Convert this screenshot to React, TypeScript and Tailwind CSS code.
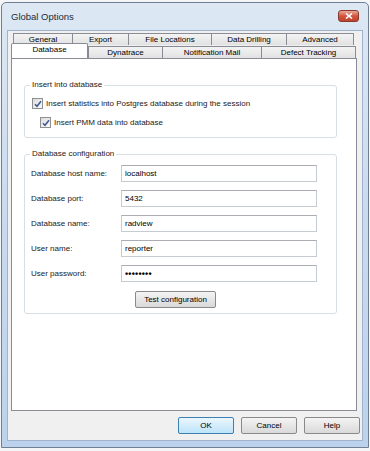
import React from "react";

const font = { fontFamily: '"Liberation Sans", Arial, sans-serif' };

function Tab({ label, w, selected }: { label: string; w: number; selected?: boolean }) {
  if (selected) {
    return (
      <div
        className="relative z-10 -mt-[2px] h-[15px] shrink-0 border border-b-0 border-[#898c95] bg-white text-center text-[8px] leading-[12px] text-black rounded-t-[2px]"
        style={{ width: w }}
      >
        {label}
      </div>
    );
  }
  return (
    <div
      className="h-[12px] shrink-0 border border-b-0 border-l-0 border-[#898c95] bg-gradient-to-b from-[#f3f3f3] to-[#e2e2e2] text-center text-[8px] leading-[11px] text-black first:border-l"
      style={{ width: w }}
    >
      {label}
    </div>
  );
}

function CheckBox() {
  return (
    <div className="flex h-[11px] w-[11px] shrink-0 items-center justify-center border border-[#8e8f8f] bg-gradient-to-br from-[#dcdcdc] to-[#fbfbfb]">
      <svg width="8" height="8" viewBox="0 0 8 8">
        <path d="M1 4.2 L3 6.3 L7 1.2" fill="none" stroke="#3f5892" strokeWidth="1.5" />
      </svg>
    </div>
  );
}

function Field({ label, value, password }: { label: string; value: string; password?: boolean }) {
  return (
    <div className="flex h-[17px] items-center">
      <div className="w-[96px] shrink-0 pl-[6px] text-[8px] leading-[10px] text-[#1a1a1a]">{label}</div>
      <div className="flex h-[17px] w-[196px] items-center border border-[#c6cbd2] border-t-[#abadb3] bg-white pl-[3px]">
        {password ? (
          <span className="text-[9px] font-bold leading-[10px] tracking-[0.2px] text-black">••••••••</span>
        ) : (
          <span className="text-[8px] leading-[10px] text-black">{value}</span>
        )}
      </div>
    </div>
  );
}

function Btn({ label, w, def }: { label: string; w: number; def?: boolean }) {
  return (
    <div
      className={
        "flex h-[17px] items-center justify-center rounded-[2px] border text-[8px] leading-[10px] text-black " +
        (def
          ? "border-[#3c7fb1] bg-gradient-to-b from-[#ebf6fd] to-[#bde4f9]"
          : "border-[#8a8a8a] bg-gradient-to-b from-[#f4f4f4] to-[#d9d9d9]")
      }
      style={{ width: w }}
    >
      {label}
    </div>
  );
}

export default function App() {
  return (
    <div className="h-[451px] w-[370px] overflow-hidden bg-[#f4f5f6]" style={font}>
      <div className="ml-[1px] mt-[2px] flex h-[446px] w-[368px] flex-col rounded-t-[5px] border border-[#6f7f94] bg-gradient-to-b from-[#dde8f4] via-[#c9daee] to-[#bcd2ec]">
        {/* title bar */}
        <div className="flex h-[27px] items-center justify-between pl-[9px] pr-[9px]">
          <span className="text-[9.5px] leading-[12px] text-[#1e2a3a]">Global Options</span>
          <div className="mt-[-1px] flex h-[12px] w-[21px] items-center justify-center rounded-[3px] border border-[#8a3a2c] bg-gradient-to-b from-[#e9a99b] via-[#d0553f] to-[#c2432c]">
            <svg width="8" height="6" viewBox="0 0 8 6">
              <path d="M1 0.5 L7 5.5 M7 0.5 L1 5.5" stroke="white" strokeWidth="1.6" />
            </svg>
          </div>
        </div>
        {/* client area */}
        <div className="mx-[5px] flex h-[411px] flex-col border border-[#9fb3cc] bg-[#f0f0f0] pl-[3px] pt-[2px]">
          {/* tabs */}
          <div className="flex h-[25px] flex-col">
            <div className="ml-[2px] flex h-[12px]">
              <Tab label="General" w={60} />
              <Tab label="Export" w={56} />
              <Tab label="File Locations" w={83} />
              <Tab label="Data Drilling" w={75} />
              <Tab label="Advanced" w={67} />
            </div>
            <div className="flex h-[13px] items-end">
              <Tab label="Database" w={77} selected />
              <div className="flex">
                <Tab label="Dynatrace" w={75} />
                <Tab label="Notification Mail" w={99} />
                <Tab label="Defect Tracking" w={94} />
              </div>
            </div>
          </div>
          {/* panel */}
          <div className="flex h-[353px] w-[346px] flex-col border border-[#898c95] bg-white pl-[12px] pt-[21px]">
            <fieldset className="h-[58px] w-[313px] rounded-[3px] border border-[#d5dfe5] px-0 pb-0 pt-0">
              <legend className="ml-[5px] px-[2px] text-[8px] leading-[10px] text-[#1a1a1a]">Insert into database</legend>
              <div className="ml-[7px] mt-[8px] flex h-[11px] items-center gap-[3px]">
                <CheckBox />
                <span className="text-[8px] leading-[10px] text-[#1a1a1a]">Insert statistics into Postgres database during the session</span>
              </div>
              <div className="ml-[15px] mt-[8px] flex h-[11px] items-center gap-[3px]">
                <CheckBox />
                <span className="text-[8px] leading-[10px] text-[#1a1a1a]">Insert PMM data into database</span>
              </div>
            </fieldset>
            <fieldset className="mt-[11px] h-[165px] w-[313px] rounded-[3px] border border-[#d5dfe5] px-0 pb-0 pt-0">
              <legend className="ml-[5px] px-[2px] text-[8px] leading-[10px] text-[#1a1a1a]">Database configuration</legend>
              <div className="mt-[6px] flex flex-col gap-[8px]">
                <Field label="Database host name:" value="localhost" />
                <Field label="Database port:" value="5432" />
                <Field label="Database name:" value="radview" />
                <Field label="User name:" value="reporter" />
                <Field label="User password:" value="" password />
              </div>
              <div className="ml-[110px] mt-[9px]">
                <Btn label="Test configuration" w={81} />
              </div>
            </fieldset>
          </div>
          {/* buttons */}
          <div className="mt-[6px] flex justify-end gap-[7px] pr-[2px]">
            <Btn label="OK" w={56} def />
            <Btn label="Cancel" w={56} />
            <Btn label="Help" w={56} />
          </div>
        </div>
      </div>
    </div>
  );
}
